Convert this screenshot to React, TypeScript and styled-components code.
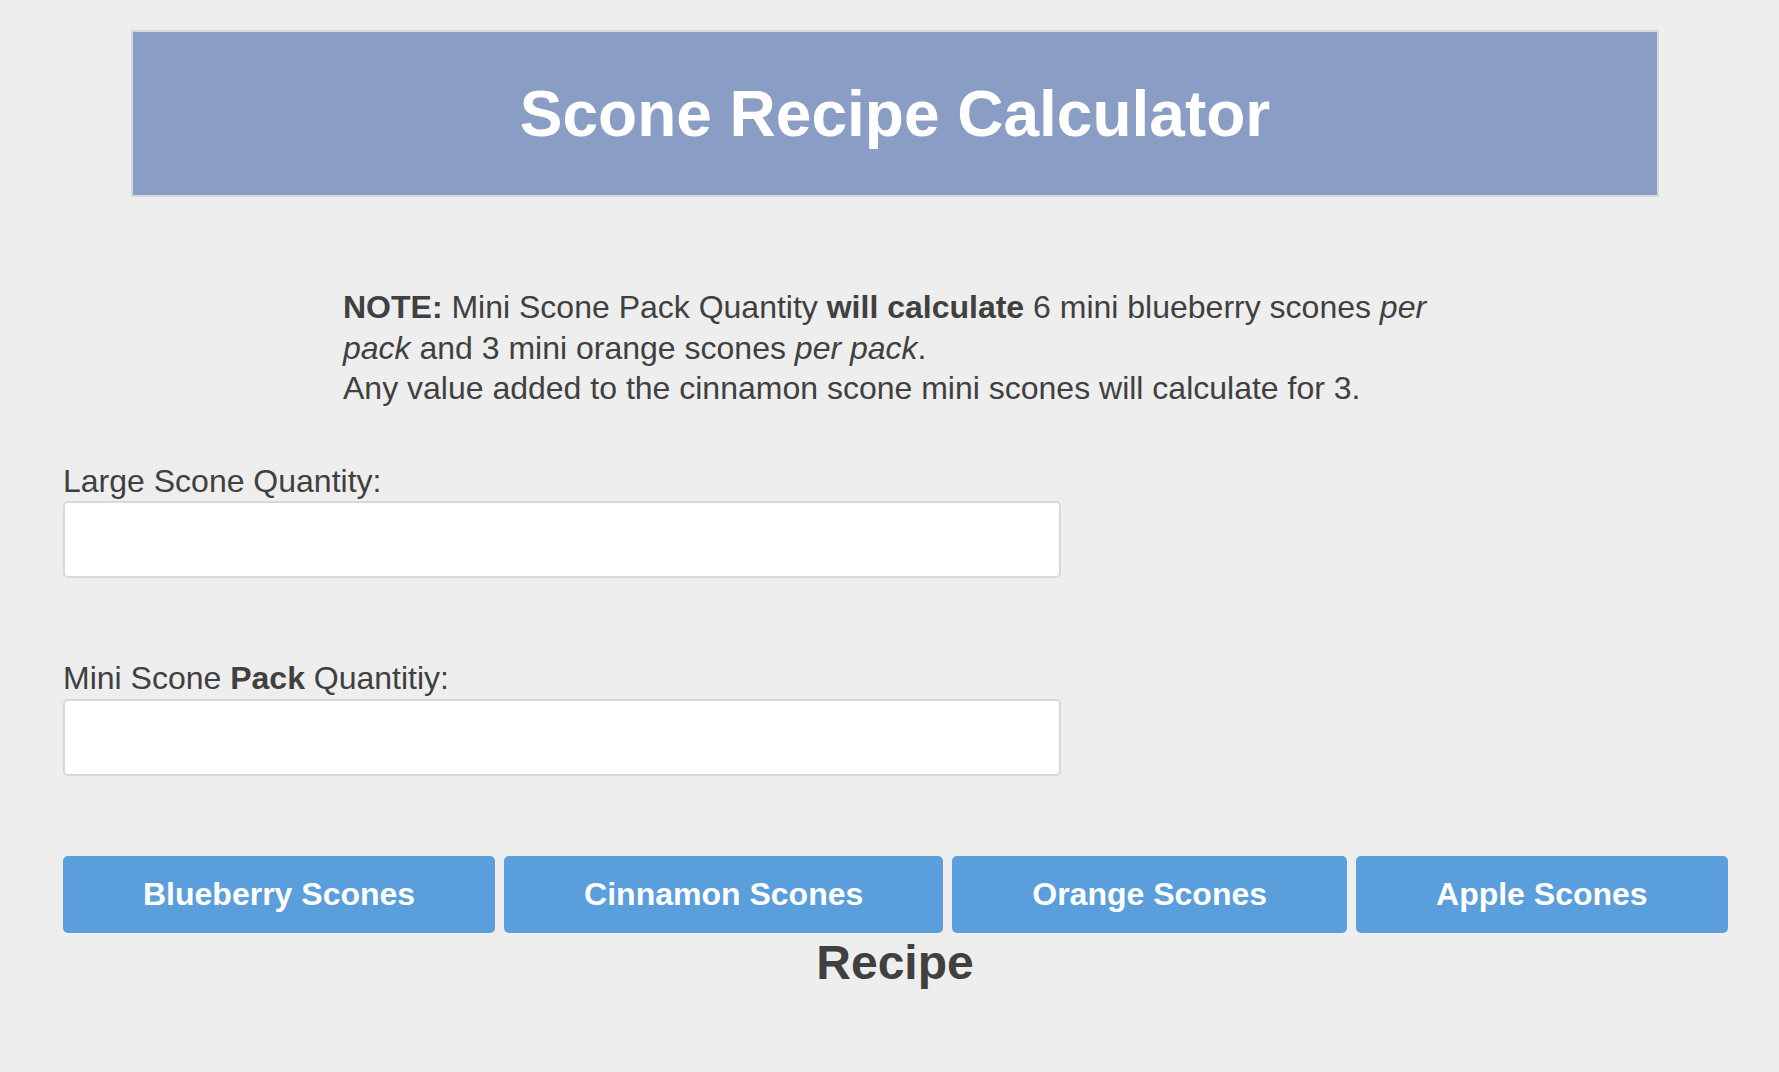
import { createGlobalStyle } from "styled-components";
import styled from "styled-components";

const GlobalStyle = createGlobalStyle`
  html, body {
    margin: 0;
    padding: 0;
    background: #eeeeee;
  }
  body {
    font-family: "Liberation Sans", Arial, sans-serif;
    font-size: 32px;
    line-height: 40.5px;
    color: #404040;
  }
`;

const Page = styled.div`
  width: 1664px;
  margin-left: 63px;
  padding-top: 30px;
  padding-bottom: 60px;
`;

const Header = styled.header`
  margin: 0 68px;
  height: 163px;
  background: #8a9dc4;
  border: 2px solid #d4d9df;
  display: flex;
  align-items: center;
  justify-content: center;
`;

const Title = styled.h1`
  margin: 0;
  font-size: 64px;
  line-height: normal;
  font-weight: bold;
  color: #ffffff;
`;

const Note = styled.p`
  margin: 90px 280px 0;
`;

const Field = styled.div<{ gap: number }>`
  margin-top: ${({ gap }) => gap}px;
`;

const Label = styled.label`
  display: block;
`;

const Input = styled.input`
  display: block;
  box-sizing: border-box;
  width: 998px;
  height: 77px;
  margin: 0;
  padding: 0 16px;
  background: #ffffff;
  border: 2px solid #d6d9dc;
  border-radius: 5px;
  font-family: inherit;
  font-size: 32px;
  color: #404040;
  outline: none;
`;

const ButtonRow = styled.div`
  display: flex;
  gap: 9px;
  margin-top: 80px;
`;

const SconeButton = styled.button`
  height: 77px;
  padding: 0 80px;
  background: #5a9fdb;
  color: #ffffff;
  border: none;
  border-radius: 5px;
  font-family: inherit;
  font-size: 32px;
  font-weight: bold;
  line-height: 40.5px;
  cursor: pointer;
  white-space: nowrap;

  &:hover {
    background: #4a90d0;
  }
`;

const RecipeTitle = styled.h2`
  margin: 2px 0 0;
  text-align: center;
  font-size: 48px;
  line-height: 55px;
  font-weight: bold;
`;

const scones = [
  "Blueberry Scones",
  "Cinnamon Scones",
  "Orange Scones",
  "Apple Scones",
];

export default function App() {
  return (
    <>
      <GlobalStyle />
      <Page>
        <Header>
          <Title>Scone Recipe Calculator</Title>
        </Header>

        <Note>
          <strong>NOTE:</strong> Mini Scone Pack Quantity{" "}
          <strong>will calculate</strong> 6 mini blueberry scones{" "}
          <em>per pack</em> and 3 mini orange scones <em>per pack</em>.
          <br />
          Any value added to the cinnamon scone mini scones will calculate for
          3.
        </Note>

        <Field gap={52}>
          <Label htmlFor="large">Large Scone Quantity:</Label>
          <Input id="large" type="number" />
        </Field>

        <Field gap={80}>
          <Label htmlFor="mini">
            Mini Scone <strong>Pack</strong> Quantitiy:
          </Label>
          <Input id="mini" type="number" />
        </Field>

        <ButtonRow>
          {scones.map((name) => (
            <SconeButton key={name}>{name}</SconeButton>
          ))}
        </ButtonRow>

        <RecipeTitle>Recipe</RecipeTitle>
      </Page>
    </>
  );
}
